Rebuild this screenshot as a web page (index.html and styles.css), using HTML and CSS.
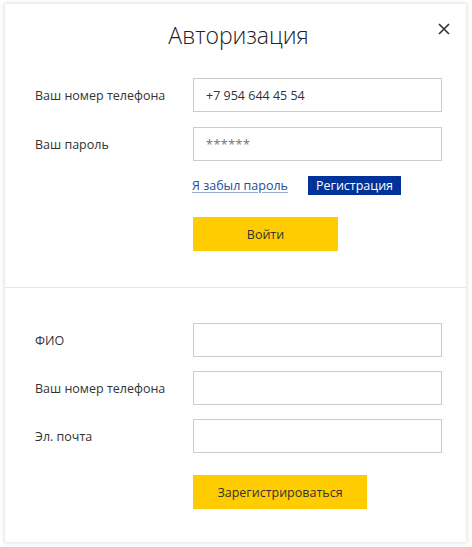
FILE: index.html
```html
<!DOCTYPE html>
<html lang="ru">
<head>
  <meta charset="UTF-8">
  <meta name="viewport" content="width=device-width, initial-scale=1.0">
  <title>Авторизация</title>
  <link rel="stylesheet" href="styles.css">
</head>
<body>
  <div class="modal">
    <button class="close-btn" type="button" aria-label="Закрыть">
      <svg width="12" height="12" viewBox="0 0 12 12">
        <path d="M1 1 L11 11 M11 1 L1 11" stroke="#333" stroke-width="1.6" fill="none"/>
      </svg>
    </button>

    <div class="section">
      <h2>Авторизация</h2>

      <div class="form-grid">
        <label for="loginPhone">Ваш номер телефона</label>
        <input type="text" id="loginPhone" value="+7 954 644 45 54">

        <label for="loginPass">Ваш пароль</label>
        <input type="text" id="loginPass" class="pass" value="******">

        <div class="links">
          <a href="#" class="forgot">Я забыл пароль</a>
          <a href="#" class="reg-link">Регистрация</a>
        </div>

        <button class="yellow-btn login-btn" type="button">Войти</button>
      </div>
    </div>

    <div class="section section-reg">
      <div class="form-grid tight">
        <label for="fio">ФИО</label>
        <input type="text" id="fio">

        <label for="regPhone">Ваш номер телефона</label>
        <input type="text" id="regPhone">

        <label for="email">Эл. почта</label>
        <input type="text" id="email">

        <button class="yellow-btn reg-btn" type="button">Зарегистрироваться</button>
      </div>
    </div>
  </div>
</body>
</html>
```

FILE: styles.css
```css
body {
  font-family: 'Open Sans', 'DejaVu Sans', sans-serif;
  background: #fff;
  color: #333;
  margin: 0;
  padding: 4px 6px 5px 5px;
}

.modal {
  position: relative;
  background: white;
  box-shadow: 0 0 4px 1px rgba(0,0,0,0.12);
}

.close-btn {
  position: absolute;
  top: 18px;
  right: 15px;
  width: 14px;
  height: 14px;
  padding: 1px;
  border: none;
  background: none;
  cursor: pointer;
}

.close-btn svg {
  display: block;
}

.section {
  padding: 15px 24px 36px 30px;
}

.section-reg {
  border-top: 1px solid #e6e6e6;
  padding-top: 35px;
  padding-bottom: 33px;
}

h2 {
  margin: 0 0 26px;
  font-size: 23px;
  font-weight: 300;
  text-align: center;
  line-height: 33px;
  color: #222;
}

.form-grid {
  display: grid;
  grid-template-columns: 158px 249px;
  row-gap: 15px;
  align-items: center;
}

.form-grid.tight {
  row-gap: 14px;
}

label {
  font-size: 12.5px;
  color: #333;
}

input {
  height: 34px;
  padding: 0 12px;
  border: 1px solid #ccc;
  box-sizing: border-box;
  font-family: inherit;
  font-size: 12.5px;
  color: #333;
  outline: none;
}

input.pass {
  color: #777;
  letter-spacing: 0.5px;
}

.links {
  grid-column: 2;
  display: flex;
  align-items: center;
  gap: 20px;
  margin-left: -1px;
}

.forgot {
  font-size: 12.5px;
  color: #2a4a9a;
  text-decoration: underline;
  text-decoration-color: #9aa8cc;
  text-underline-offset: 2px;
}

.reg-link {
  font-size: 12.5px;
  line-height: 19px;
  padding: 0 8px;
  background: #003399;
  color: white;
  text-decoration: none;
}

.yellow-btn {
  grid-column: 2;
  height: 34px;
  border: none;
  background: #ffcc00;
  color: #333;
  font-family: inherit;
  font-size: 12.5px;
  cursor: pointer;
}

.login-btn {
  width: 145px;
  margin-top: 7px;
}

.reg-btn {
  width: 174px;
  margin-top: 8px;
}

.yellow-btn:hover {
  background: #f5c400;
}
```
